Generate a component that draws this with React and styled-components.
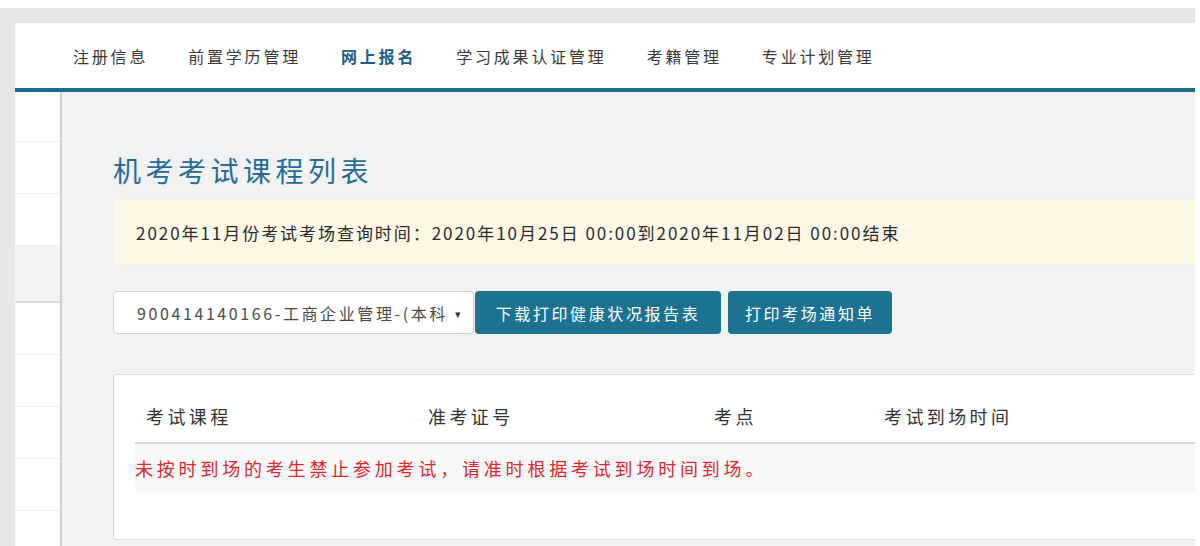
import styled, { createGlobalStyle } from "styled-components";

const GlobalStyle = createGlobalStyle`
  html, body {
    margin: 0;
    padding: 0;
    background: #ffffff;
  }
  body {
    font-family: "Noto Sans CJK SC", "Noto Sans", sans-serif;
    color: #333;
  }
`;

const navItems = [
  "注册信息",
  "前置学历管理",
  "网上报名",
  "学习成果认证管理",
  "考籍管理",
  "专业计划管理",
];

const columns = [
  { label: "考试课程", width: 282 },
  { label: "准考证号", width: 286 },
  { label: "考点", width: 170 },
  { label: "考试到场时间", width: 300 },
];

// sidebar row heights, the 4th one is the highlighted entry
const sideRows = [50, 52, 52, 57, 52, 52, 52, 52, 52];

function App() {
  return (
    <>
      <GlobalStyle />
      <Page>
        <Frame>
          <Nav>
            {navItems.map((item) => (
              <NavItem key={item} $active={item === "网上报名"}>
                {item}
              </NavItem>
            ))}
          </Nav>
          <Body>
            <Sidebar>
              {sideRows.map((h, i) => (
                <SideRow key={i} $h={h} $active={i === 3} />
              ))}
            </Sidebar>
            <Main>
              <Title>机考考试课程列表</Title>
              <Alert>
                2020年11月份考试考场查询时间：2020年10月25日 00:00到2020年11月02日 00:00结束
              </Alert>
              <Controls>
                <SelectBox>
                  <SelectText>900414140166-工商企业管理-(本科)</SelectText>
                  <Caret>▾</Caret>
                </SelectBox>
                <Button $w={246}>下载打印健康状况报告表</Button>
                <Button $w={164}>打印考场通知单</Button>
              </Controls>
              <Card>
                <HeadRow>
                  {columns.map((c) => (
                    <HeadCell key={c.label} $w={c.width}>
                      {c.label}
                    </HeadCell>
                  ))}
                </HeadRow>
                <NoticeRow>
                  未按时到场的考生禁止参加考试，请准时根据考试到场时间到场。
                </NoticeRow>
              </Card>
            </Main>
          </Body>
        </Frame>
      </Page>
    </>
  );
}

const Page = styled.div`
  margin: 8px 5px 0 0;
  height: 538px;
  background: #e6e7e9;
  padding: 15px 0 0 15px;
  box-sizing: border-box;
  overflow: hidden;
`;

const Frame = styled.div`
  background: #fff;
  height: 100%;
  display: flex;
  flex-direction: column;
`;

const Nav = styled.div`
  height: 65px;
  display: flex;
  align-items: center;
  padding-left: 38px;
  border-bottom: 4px solid #1b6d8b;
`;

const NavItem = styled.div`
  font-size: 16px;
  letter-spacing: 2.8px;
  padding: 0 20px;
  color: ${(p) => (p.$active ? "#1d5d8a" : "#3a3a3a")};
  font-weight: ${(p) => (p.$active ? 700 : 400)};
`;

const Body = styled.div`
  flex: 1;
  display: flex;
  min-height: 0;
`;

const Sidebar = styled.div`
  width: 45px;
  flex-shrink: 0;
  background: #fff;
  border-right: 2px solid #cfd0d2;
  overflow: hidden;
`;

const SideRow = styled.div`
  height: ${(p) => p.$h}px;
  box-sizing: border-box;
  background: ${(p) => (p.$active ? "#f3f3f4" : "#fff")};
  border-bottom: ${(p) => (p.$active ? "2px solid #d9dadc" : "1px solid #f0f0f1")};
`;

const Main = styled.div`
  flex: 1;
  background: #f1f2f4;
  padding: 58px 0 0 51px;
  overflow: hidden;
`;

const Title = styled.h1`
  margin: 0 0 9px;
  font-size: 28px;
  line-height: 40px;
  font-weight: 400;
  letter-spacing: 4.5px;
  color: #266c9a;
`;

const Alert = styled.div`
  height: 66px;
  display: flex;
  align-items: center;
  padding: 0 22px;
  background: #fcf8e5;
  border: 1px solid #f7f0d6;
  border-right: none;
  border-radius: 4px 0 0 4px;
  font-size: 17px;
  letter-spacing: 1.95px;
  color: #2b2b2b;
  white-space: nowrap;
  box-sizing: border-box;
`;

const Controls = styled.div`
  margin-top: 26px;
  display: flex;
  gap: 7px;
  height: 43px;
`;

const SelectBox = styled.div`
  width: 361px;
  margin-right: -6px;
  box-sizing: border-box;
  background: #fff;
  border: 1px solid #cfd0d3;
  border-radius: 4px;
  display: flex;
  align-items: center;
  padding: 0 12px 0 23px;
  font-size: 16px;
  color: #4a4a4a;
`;

const SelectText = styled.span`
  flex: 1;
  overflow: hidden;
  white-space: nowrap;
  letter-spacing: 2.6px;
`;

const Caret = styled.span`
  font-size: 11px;
  color: #333;
  margin-left: 8px;
`;

const Button = styled.button`
  width: ${(p) => p.$w}px;
  height: 43px;
  border: none;
  border-radius: 4px;
  background: #1b7391;
  color: #fff;
  font-family: inherit;
  font-size: 16px;
  letter-spacing: 2.6px;
  padding: 0;
`;

const Card = styled.div`
  margin-top: 40px;
  height: 166px;
  box-sizing: border-box;
  background: #fff;
  border: 1px solid #dcdde0;
  border-right: none;
  border-radius: 4px 0 0 4px;
  padding: 19px 0 0 21px;
`;

const HeadRow = styled.div`
  display: flex;
  height: 50px;
  align-items: center;
  border-bottom: 2px solid #d6d7da;
  box-sizing: border-box;
  padding-bottom: 4px;
`;

const HeadCell = styled.div`
  width: ${(p) => p.$w}px;
  flex-shrink: 0;
  box-sizing: border-box;
  padding-left: 11px;
  font-size: 18px;
  letter-spacing: 3.4px;
  color: #333;
`;

const NoticeRow = styled.div`
  height: 48px;
  display: flex;
  align-items: center;
  background: #f8f8f9;
  color: #e2262c;
  font-size: 18px;
  letter-spacing: 3.8px;
  white-space: nowrap;
`;

export default App;
